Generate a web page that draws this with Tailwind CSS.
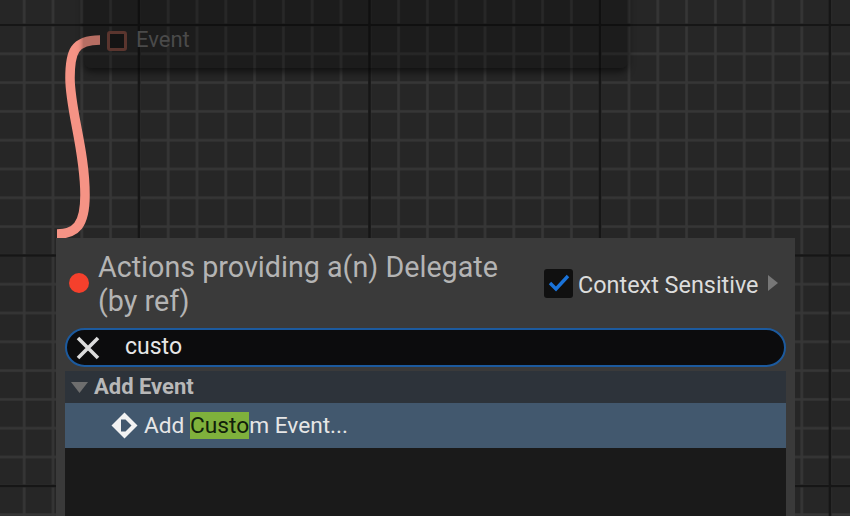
<!doctype html>
<html lang="en">
    <head>
        <meta charset="UTF-8" />
        <title>Blueprint graph</title>
        <script src="https://cdn.jsdelivr.net/npm/@tailwindcss/browser@4"></script>
    </head>
    <body class="relative h-[516px] w-[850px] overflow-hidden bg-[#262626] font-['Roboto',sans-serif]">
        <!-- graph grid and wire, the node sits on top of both -->
        <svg class="absolute inset-0" width="850" height="516">
            <defs>
                <pattern id="minor" x="9.8" y="10.6" width="28.8" height="28.8" patternUnits="userSpaceOnUse">
                    <path d="M14.4 0V28.8M0 14.4H28.8" stroke="#363636" stroke-width="2.6" fill="none" />
                </pattern>
            </defs>
            <rect width="850" height="516" fill="url(#minor)" />
            <path d="M139 0V516M369.5 0V516M600 0V516M830 0V516M0 25H850M0 255.5H850M0 486H850" stroke="#161616" stroke-width="2.6" fill="none" />
            <path d="M100 40C74 40 70 52 70 78C70 110 85 150 85 195C85 225 76 234 57 234" stroke="#f59385" stroke-width="9.5" fill="none" />
        </svg>

        <!-- faded event node -->
        <div class="absolute top-[-20px] left-[84px] flex h-[88px] w-[544px] items-end rounded-b-[7px] bg-black/25 pb-[17px] pl-[23px] shadow-[0_4px_7px_rgba(0,0,0,0.55)]">
            <span class="h-[20px] w-[20px] rounded-[3px] border-[3px] border-[#5a352e] bg-[#141414]"></span>
            <span class="mb-[-1px] ml-[9px] text-[22px] leading-[24px] text-[#4a4a4a]">Event</span>
        </div>

        <!-- action menu -->
        <div class="absolute top-[238px] left-[56px] flex h-[278px] w-[739px] flex-col bg-[#3a3a3a] px-[9px]">
            <div class="flex h-[90px] items-center">
                <span class="ml-[4px] h-[20px] w-[20px] shrink-0 rounded-full bg-[#f5402c]"></span>
                <div class="mt-[2px] ml-[9px] w-[430px] text-[28.7px] leading-[34px] text-[#b4b4b4]">Actions providing a(n) Delegate<br />(by ref)</div>
                <div class="ml-[16px] flex items-center">
                    <span class="flex h-[29px] w-[29px] items-center justify-center rounded-[3px] bg-[#101010]">
                        <svg width="22" height="18" viewBox="0 0 22 18"><path d="M2 9L8 15L20 2" stroke="#1a73d9" stroke-width="3.4" fill="none" /></svg>
                    </span>
                    <span class="mt-[4px] ml-[5px] text-[23.4px] leading-[30px] whitespace-nowrap text-[#dcdcdc]">Context Sensitive</span>
                    <svg class="ml-[9px]" width="10" height="16" viewBox="0 0 10 16"><path d="M0 0L10 8L0 16Z" fill="#777777" /></svg>
                </div>
            </div>
            <div class="flex h-[39px] items-center rounded-full border-2 border-[#1c5a9e] bg-[#0c0c0d] pl-[9px]">
                <svg width="24" height="24" viewBox="0 0 24 24"><path d="M2 2L22 22M22 2L2 22" stroke="#dcdcdc" stroke-width="3.6" fill="none" /></svg>
                <span class="ml-[25px] text-[23px] text-[#e6e6e6]">custo</span>
            </div>
            <div class="mt-[4px] flex h-[32px] items-center bg-[#2d333a] pl-[6px]">
                <svg width="17" height="11" viewBox="0 0 17 11"><path d="M0 0H17L8.5 11Z" fill="#6e6e6e" /></svg>
                <span class="mb-[2px] ml-[6px] text-[22px] font-bold text-[#b8b8b8]">Add Event</span>
            </div>
            <div class="flex h-[45px] items-center bg-[#42586e] pl-[46px]">
                <svg width="27" height="27" viewBox="0 0 27 27">
                    <path d="M13.5 0.5L26.5 13.5L13.5 26.5L0.5 13.5Z" fill="#f2f2f2" />
                    <path d="M10 7.5H14.5L20.5 13.5L14.5 19.5H10Z" fill="#42586e" />
                </svg>
                <span class="mt-[2px] ml-[6px] text-[22.7px] text-[#e6e6e6]">Add <span class="bg-[#7fb13c] text-[#10200a]">Custo</span>m Event...</span>
            </div>
            <div class="flex-1 bg-[#1a1a1a]"></div>
        </div>
    </body>
</html>
